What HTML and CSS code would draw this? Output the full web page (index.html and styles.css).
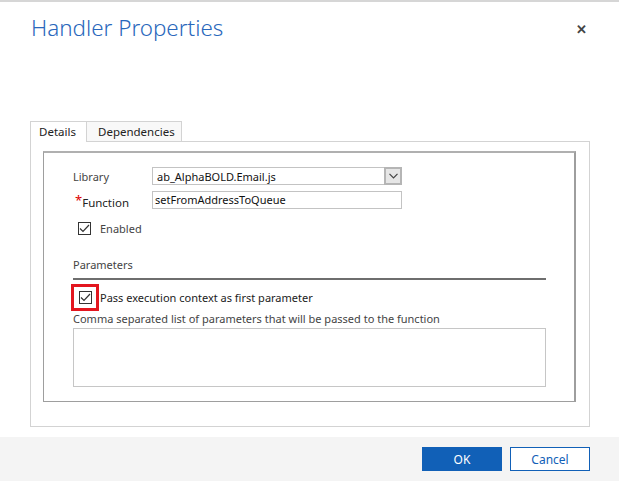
FILE: index.html
```html
<!DOCTYPE html>
<html>
<head>
<meta charset="utf-8">
<link rel="stylesheet" href="styles.css">
</head>
<body>
<div class="dialog">
  <div class="header">
    <h1 class="title">Handler Properties</h1>
    <span class="close">&#x2715;</span>
  </div>
  <div class="main">
    <div class="tabs">
      <div class="tab active">Details</div>
      <div class="tab">Dependencies</div>
      <div class="tab-fill"></div>
    </div>
    <div class="panel">
      <div class="fieldbox">
        <div class="row">
          <span class="label">Library</span>
          <div class="select">
            <span class="select-text">ab_AlphaBOLD.Email.js</span>
            <span class="select-btn">
              <svg width="9" height="6" viewBox="0 0 9 6"><path d="M0.5 0.8 L4.5 4.8 L8.5 0.8" fill="none" stroke="#444" stroke-width="1.2"/></svg>
            </span>
          </div>
        </div>
        <div class="row row-fn">
          <span class="label label-fn"><span class="req">*</span>Function</span>
          <div class="input">setFromAddressToQueue</div>
        </div>
        <div class="check-row enabled">
          <span class="checkbox"><svg width="11" height="9" viewBox="0 0 11 9"><path d="M1 4.5 L4 7.5 L10 1" fill="none" stroke="#333" stroke-width="1.2"/></svg></span>
          <span class="check-label">Enabled</span>
        </div>
        <div class="section-title">Parameters</div>
        <div class="check-row pass">
          <span class="highlight"><span class="checkbox"><svg width="11" height="9" viewBox="0 0 11 9"><path d="M1 4.5 L4 7.5 L10 1" fill="none" stroke="#333" stroke-width="1.2"/></svg></span></span>
          <span class="check-label pass-label">Pass execution context as first parameter</span>
        </div>
        <div class="hint">Comma separated list of parameters that will be passed to the function</div>
        <div class="textarea"></div>
      </div>
    </div>
  </div>
  <div class="footer">
    <button class="btn btn-ok">OK</button>
    <button class="btn btn-cancel">Cancel</button>
  </div>
</div>
</body>
</html>
```

FILE: styles.css
```css
html, body {
  margin: 0;
  padding: 0;
  background: #fff;
}
body {
  font-family: "Noto Sans", "Open Sans", sans-serif;
  font-size: 11px;
  color: #333;
}
.dialog {
  width: 619px;
  height: 481px;
  border-top: 2px solid #d6d6d6;
  box-sizing: border-box;
  display: flex;
  flex-direction: column;
}
.header {
  display: flex;
  align-items: flex-start;
  justify-content: space-between;
  padding: 0 32px 0 31px;
  height: 119px;
}
.title {
  margin: 11px 0 0;
  font-family: "Noto Sans", sans-serif;
  font-weight: 300;
  font-size: 22.4px;
  line-height: 30px;
  color: #2a68bc;
}
.close {
  margin-top: 19px;
  font-size: 13px;
  font-weight: bold;
  color: #444;
  line-height: 16px;
}
.main {
  padding: 0 29px 0 30px;
}
.tabs {
  display: flex;
  height: 21px;
}
.tab {
  box-sizing: border-box;
  height: 21px;
  border: 1px solid #d3d3d3;
  border-bottom: none;
  line-height: 19px;
  color: #222;
  font-size: 11.5px;
}
.tab.active {
  width: 57px;
  padding-left: 8px;
  background: #fff;
}
.tab:not(.active) {
  width: 95px;
  padding-left: 11px;
  border-left: none;
  background: #f8f8f8;
  border-bottom: 1px solid #d3d3d3;
}
.tab-fill {
  flex: 1;
  border-bottom: 1px solid #d3d3d3;
}
.panel {
  border: 1px solid #d3d3d3;
  border-top: none;
  height: 285px;
  box-sizing: border-box;
  padding: 9px 13px 0 12px;
}
.fieldbox {
  box-sizing: border-box;
  height: 251px;
  border: 1px solid #9e9e9e;
  border-right: 2px solid #9e9e9e;
  border-top: 2px solid #b0b0b0;
  padding: 14px 28px 0 29px;
}
.row {
  display: flex;
  align-items: center;
  height: 18px;
}
.row-fn {
  margin-top: 6px;
}
.label {
  width: 79px;
  color: #444;
}
.label-fn {
  padding-top: 5px;
  color: #222;
  font-size: 11.5px;
}
.req {
  color: #d00;
  font-size: 13px;
  margin-left: 2px;
  vertical-align: top;
  line-height: 10px;
}
.select {
  box-sizing: border-box;
  width: 250px;
  height: 18px;
  border: 1px solid #c3c3c3;
  display: flex;
  align-items: center;
}
.select-text {
  flex: 1;
  padding-left: 4px;
  color: #111;
}
.select-btn {
  box-sizing: border-box;
  width: 18px;
  height: 18px;
  margin: -1px -1px -1px 0;
  background: #e6e6e6;
  border: 2px solid #b5b5b5;
  display: flex;
  align-items: center;
  justify-content: center;
}
.input {
  box-sizing: border-box;
  width: 250px;
  height: 18px;
  border: 1px solid #c3c3c3;
  padding-left: 2px;
  line-height: 15px;
  color: #111;
}
.check-row {
  display: flex;
  align-items: center;
}
.enabled {
  margin-top: 12px;
  margin-left: 5px;
}
.checkbox {
  box-sizing: border-box;
  width: 13px;
  height: 13px;
  border: 1px solid #333;
  display: flex;
  align-items: center;
  justify-content: center;
  background: #fff;
}
.check-label {
  margin-left: 9px;
  color: #444;
}
.section-title {
  margin-top: 21px;
  padding-bottom: 5px;
  border-bottom: 2px solid #6e6e6e;
  color: #444;
  line-height: 16px;
}
.pass {
  margin-top: 4px;
  margin-left: -2px;
}
.highlight {
  box-sizing: border-box;
  width: 28px;
  height: 27px;
  border: 3px solid #e3161f;
  display: flex;
  align-items: center;
  justify-content: center;
}
.pass-label {
  margin-left: 1px;
  color: #222;
}
.hint {
  margin-top: 0;
  color: #444;
  line-height: 16px;
}
.textarea {
  margin-top: 1px;
  height: 59px;
  box-sizing: border-box;
  border: 1px solid #c6c6c6;
}
.footer {
  margin-top: 10px;
  flex: 1;
  background: #f4f4f4;
  display: flex;
  justify-content: flex-end;
  align-items: flex-start;
  padding: 10px 29px 0 0;
  gap: 8px;
}
.btn {
  box-sizing: border-box;
  width: 80px;
  height: 24px;
  font-family: "Noto Sans", sans-serif;
  font-size: 12px;
  border: 1px solid #1160b7;
  cursor: pointer;
  padding: 0;
}
.btn-ok {
  background: #1160b7;
  color: #fff;
}
.btn-cancel {
  background: #fff;
  color: #1160b7;
}
```
